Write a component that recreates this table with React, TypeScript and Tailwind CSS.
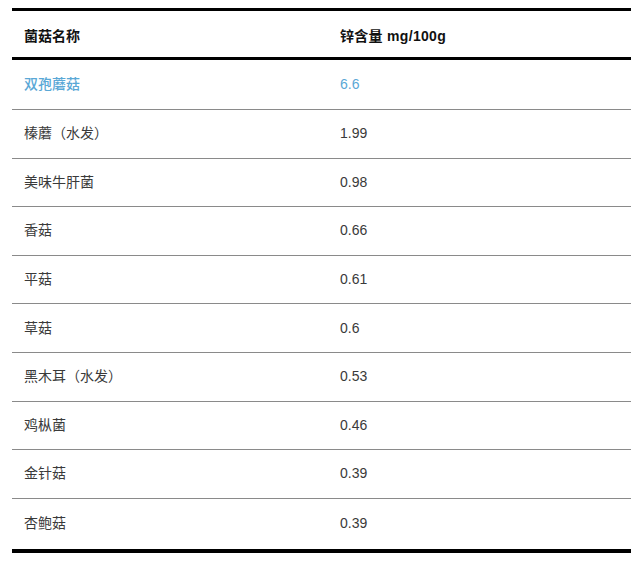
const rows: [string, string][] = [
  ['榛蘑（水发）', '1.99'],
  ['美味牛肝菌', '0.98'],
  ['香菇', '0.66'],
  ['平菇', '0.61'],
  ['草菇', '0.6'],
  ['黑木耳（水发）', '0.53'],
  ['鸡枞菌', '0.46'],
  ['金针菇', '0.39'],
  ['杏鲍菇', '0.39'],
];

export default function App() {
  return (
    <div
      className="h-[565px] w-[640px] bg-white pt-2 pl-3 pr-[9px]"
      style={{ fontFamily: '"Liberation Sans", "Noto Sans CJK SC", sans-serif' }}
    >
      <div className="border-t-[3px] border-b-4 border-black">
        <div className="flex h-[49px] items-center border-b-[3px] border-black pt-1 text-[14px] font-bold text-[#111]">
          <div className="w-[328px] pl-3">菌菇名称</div>
          <div className="tracking-[0.3px]">锌含量 mg/100g</div>
        </div>
        <div className="flex h-[50px] items-center border-b-[1.5px] border-[#8a8a8a] text-[14px] font-medium text-[#5aa8d6]">
          <div className="w-[328px] pl-3">双孢蘑菇</div>
          <div>6.6</div>
        </div>
        {rows.map(([name, value], i) => (
          <div
            key={name}
            className={
              'flex items-center text-[14px] text-[#3a3a3a] ' +
              (i < rows.length - 1 ? 'h-[48.6px] border-b-[1.5px] border-[#8a8a8a]' : 'h-[50px]')
            }
          >
            <div className="w-[328px] pl-3">{name}</div>
            <div>{value}</div>
          </div>
        ))}
      </div>
    </div>
  );
}
